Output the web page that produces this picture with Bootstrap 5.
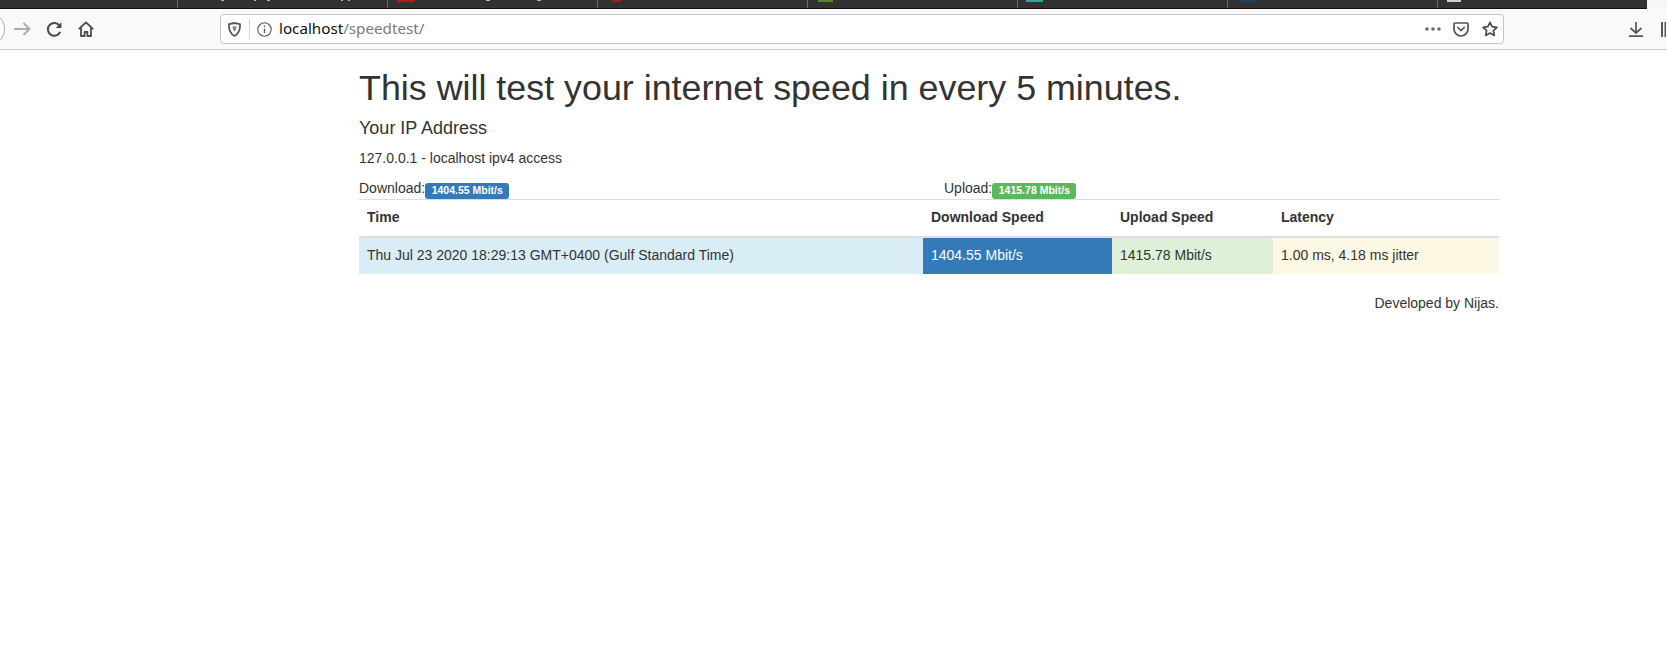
<!DOCTYPE html>
<html lang="en">
<head>
    <meta charset="UTF-8">
    <meta name="viewport" content="width=device-width, initial-scale=1.0">
    <title>Speedtest</title>

    <link href="https://cdn.jsdelivr.net/npm/bootstrap@5.3.3/dist/css/bootstrap.min.css" rel="stylesheet">
    <script src="https://cdn.jsdelivr.net/npm/bootstrap@5.3.3/dist/js/bootstrap.bundle.min.js"></script>

    <style>
        body {
            font-family: "Liberation Sans", Arial, sans-serif;
            font-size: 14px;
            line-height: 20px;
            color: #333;
            background: #fff;
            overflow: hidden;
        }

        /* browser window */
        .tab-strip-row {
            height: 9px;
            background: #f6f6f7;
        }
        .tab-strip {
            width: 1647px;
            height: 9px;
            background: #323232;
            border-bottom: 1px solid #111;
        }
        .browser-tab {
            width: 210px;
            height: 8px;
            flex: none;
            border-right: 1px solid #6b6b6b;
        }
        .browser-tab svg { display: block; }
        .first-tab { width: 178px; }
        .tool-bar {
            height: 41px;
            background: #f9f9fa;
            border-bottom: 1px solid #ccc;
        }
        .tool-bar svg { display: block; flex: none; }
        .back-stub { margin-right: 8px; }
        .forward-icon { margin-right: 15px; }
        .reload-icon { margin-right: 15px; }
        .url-box {
            width: 1284px;
            height: 30px;
            margin-left: 126px;
            background: #fff;
            border: 1px solid #c4c4c4;
            border-radius: 4px;
            font-family: "Noto Sans", "Open Sans", sans-serif;
            font-size: 15.2px;
            line-height: 1;
        }
        .shield-icon { margin-left: 7px; }
        .url-divider {
            width: 1px;
            height: 20px;
            margin: 0 7px 0 8px;
            background: #d5d5d5;
        }
        .url-host { color: #111; margin-left: 7px; }
        .url-path { color: #7b7b7b; }
        .dots-icon { margin-left: auto; margin-right: 12px; }
        .pocket-icon { margin-right: 13px; }
        .star-icon { margin-right: 5px; }
        .download-icon { margin-left: 125px; margin-right: 18px; }

        /* page */
        .speed-wrap {
            width: 1170px;
            max-width: none;
            margin-left: 344px;
            padding: 0 15px;
        }
        .speed-wrap .row { --bs-gutter-x: 30px; }
        .page-title {
            font-family: inherit;
            font-size: 35.85px;
            font-weight: 400;
            line-height: 40px;
            margin: 18px 0 10px;
            color: #333;
        }
        .ip-title {
            font-family: inherit;
            font-size: 18px;
            font-weight: 400;
            line-height: 20px;
            margin: 10px 0;
            color: #333;
        }
        .ip-line { margin: 0 0 10px; }
        .speed-pill {
            display: inline-block;
            font-size: 10.5px;
            font-weight: 700;
            line-height: 10.5px;
            color: #fff;
            padding: 2px 6.5px 3px;
            border-radius: 3px;
            vertical-align: -1px;
        }
        .pill-blue { background: #337ab7; }
        .pill-green { background: #5cb85c; }
        .speed-row { height: 21px; }

        .speed-table {
            width: 1140px;
            table-layout: fixed;
            margin-bottom: 19px;
            color: #333;
        }
        .speed-table th,
        .speed-table td {
            padding: 8px;
            line-height: 20px;
            font-size: 14px;
            color: #333;
            border-bottom: 0;
        }
        .speed-table thead th {
            padding-top: 7px;
            padding-bottom: 9px;
            border-top: 1px solid #ddd;
            border-bottom: 2px solid #ddd;
            font-weight: 700;
        }
        .speed-table td { height: 36px; padding-top: 7px; padding-bottom: 9px; }
        .col-time { width: 564px; }
        .col-down { width: 189px; }
        .col-up { width: 161px; }
        .speed-table td.cell-info { background-color: #d9edf7; }
        .speed-table td.cell-primary { background-color: #337ab7; color: #fff; }
        .speed-table td.cell-success { background-color: #dff0d8; }
        .speed-table td.cell-warning { background-color: #fcf8e3; }
        .dev-note { margin: 0; }
    </style>
</head>
<body>
    <!-- browser window -->
    <div class="tab-strip-row">
        <div class="tab-strip d-flex">
            <div class="browser-tab first-tab"></div>
            <div class="browser-tab">
                <svg width="209" height="8"><g fill="#b5b5b5"><rect x="43" width="3" height="1"/><rect x="76" width="2" height="1"/><rect x="89" width="3" height="1"/><rect x="163" width="2" height="1"/><rect x="170" width="2" height="1"/></g></svg>
            </div>
            <div class="browser-tab">
                <svg width="209" height="8"><rect x="9" width="18" height="2" fill="#b3191f"/><g fill="#b5b5b5"><rect x="98" width="4" height="1"/><rect x="149" width="4" height="1"/></g></svg>
            </div>
            <div class="browser-tab">
                <svg width="209" height="8"><rect x="14" width="9" height="2" fill="#a8182a"/></svg>
            </div>
            <div class="browser-tab">
                <svg width="209" height="8"><rect x="10" width="15" height="2" fill="#55892a"/></svg>
            </div>
            <div class="browser-tab">
                <svg width="209" height="8"><rect x="8" width="17" height="2" fill="#2aa9a0"/></svg>
            </div>
            <div class="browser-tab">
                <svg width="209" height="8"><rect x="11" width="17" height="2" fill="#23405c"/></svg>
            </div>
            <div class="browser-tab border-0">
                <svg width="209" height="8"><rect x="9" width="14" height="2" fill="#cfcfcf"/></svg>
            </div>
        </div>
    </div>
    <div class="tool-bar d-flex align-items-center">
        <svg class="back-stub" width="6" height="34" viewBox="0 0 6 34"><circle cx="-12" cy="17" r="16.5" fill="#fff" stroke="#b1b1b1"/></svg>
        <svg class="forward-icon" width="17" height="14" viewBox="0 0 17 14" fill="none" stroke="#adadad" stroke-width="2"><path d="M0 7h15.5M9.500 1l6 6-6 6"/></svg>
        <svg class="reload-icon" width="17" height="17" viewBox="0 0 16 16" fill="none" stroke="#4c4c4f" stroke-width="2"><path d="M13.300 10.300A6 6 0 1 1 12.800 4.600"/><path d="M14.500 1.200v5.300H9.200z" fill="#4c4c4f" stroke="none"/></svg>
        <svg width="16" height="16" viewBox="0 0 16 16" fill="none" stroke="#4c4c4f" stroke-width="1.800" stroke-linejoin="round"><path d="M.8 8.200 8 1.400l7.200 6.800M3 6.500V15h3.600v-4h2.800v4H13V6.500"/></svg>
        <div class="url-box d-flex align-items-center">
            <svg class="shield-icon" width="13" height="15" viewBox="0 0 13 15" fill="none" stroke="#55555a" stroke-width="1.800"><path d="M1 2.200 6.500 1 12 2.200c.3 5.200-1.200 9.600-5.500 11.800C2.200 11.800.7 7.400 1 2.200z"/><path d="M4.500 4.300h4c0 2.500-.6 4.100-2 5.300-1.400-1.200-2-2.800-2-5.300z" fill="#8a8a8e" stroke="none"/></svg>
            <span class="url-divider"></span>
            <svg width="15" height="15" viewBox="0 0 15 15" fill="none" stroke="#5a5a5e" stroke-width="1.100"><circle cx="7.500" cy="7.500" r="6.700"/><path d="M7.500 6.500v4.500M7.500 3.500v1.500" stroke-width="1.400"/></svg>
            <span class="url-host">localhost</span><span class="url-path">/speedtest/</span>
            <svg class="dots-icon" width="16" height="4" viewBox="0 0 16 4" fill="#6a6a6e"><circle cx="2" cy="2" r="1.800"/><circle cx="8" cy="2" r="1.800"/><circle cx="14" cy="2" r="1.800"/></svg>
            <svg class="pocket-icon" width="16" height="15" viewBox="0 0 16 15" fill="none" stroke="#55555a" stroke-width="1.700"><path d="M2 1h12a1 1 0 0 1 1 1v5a7 7 0 0 1-14 0V2a1 1 0 0 1 1-1z"/><path d="m4.800 5.500 3.200 3 3.200-3" stroke-linecap="round"/></svg>
            <svg class="star-icon" width="16" height="16" viewBox="0 0 16 16" fill="none" stroke="#4c4c4f" stroke-width="1.700" stroke-linejoin="round"><path d="m8 1.300 2.100 4.400 4.800.6-3.500 3.300.9 4.800L8 12.100l-4.300 2.300.9-4.800L1.100 6.300l4.800-.6z"/></svg>
        </div>
        <svg class="download-icon" width="14" height="15" viewBox="0 0 14 15" fill="none" stroke="#55555a" stroke-width="1.700"><path d="M7 0v11M1.500 6 7 11l5.500-5M0 14.200h14"/></svg>
        <svg width="5" height="15" viewBox="0 0 5 15" fill="#55555a"><rect width="2" height="15"/><rect x="3.500" width="2" height="15"/></svg>
    </div>

    <!-- page content -->
    <div class="speed-wrap">
        <h1 class="page-title">This will test your internet speed in every 5 minutes.</h1>
        <h4 class="ip-title">Your IP Address</h4>
        <p class="ip-line">127.0.0.1 - localhost ipv4 access</p>

        <div class="row speed-row">
            <div class="col-6">Download:<span class="speed-pill pill-blue">1404.55 Mbit/s</span></div>
            <div class="col-6">Upload:<span class="speed-pill pill-green">1415.78 Mbit/s</span></div>
        </div>

        <table class="table speed-table">
            <thead>
                <tr>
                    <th class="col-time">Time</th>
                    <th class="col-down">Download Speed</th>
                    <th class="col-up">Upload Speed</th>
                    <th>Latency</th>
                </tr>
            </thead>
            <tbody>
                <tr>
                    <td class="cell-info">Thu Jul 23 2020 18:29:13 GMT+0400 (Gulf Standard Time)</td>
                    <td class="cell-primary">1404.55 Mbit/s</td>
                    <td class="cell-success">1415.78 Mbit/s</td>
                    <td class="cell-warning">1.00 ms, 4.18 ms jitter</td>
                </tr>
            </tbody>
        </table>

        <p class="dev-note text-end">Developed by Nijas.</p>
    </div>
</body>
</html>
